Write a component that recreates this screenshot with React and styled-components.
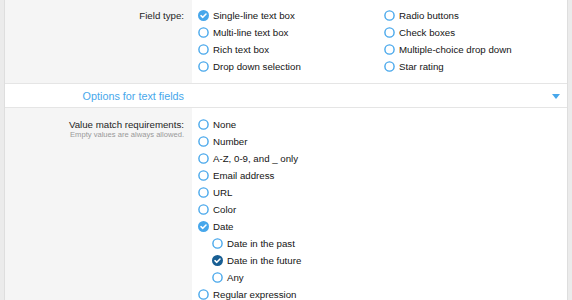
import React from "react";
import styled, { createGlobalStyle } from "styled-components";

const GlobalStyle = createGlobalStyle`
  body {
    margin: 0;
    background: #ebebeb;
    font-family: "Liberation Sans", Arial, sans-serif;
    font-size: 9.7px;
    color: #141414;
  }
`;

const fieldTypes = [
  ["Single-line text box", "Radio buttons"],
  ["Multi-line text box", "Check boxes"],
  ["Rich text box", "Multiple-choice drop down"],
  ["Drop down selection", "Star rating"],
];

const matchOptions = [
  { label: "None" },
  { label: "Number" },
  { label: "A-Z, 0-9, and _ only" },
  { label: "Email address" },
  { label: "URL" },
  { label: "Color" },
  { label: "Date", checked: true },
  { label: "Date in the past", nested: true },
  { label: "Date in the future", nested: true, checked: true, dark: true },
  { label: "Any", nested: true },
  { label: "Regular expression" },
];

function Radio({ checked, dark }) {
  return (
    <RadioIcon viewBox="0 0 11 11">
      {checked ? (
        <>
          <circle cx="5.5" cy="5.5" r="5.5" fill={dark ? "#185e93" : "#47a7eb"} />
          <path d="M3 5.7 L4.8 7.3 L8 4" fill="none" stroke="#fff" strokeWidth="1.6" strokeLinecap="round" strokeLinejoin="round" />
        </>
      ) : (
        <circle cx="5.5" cy="5.5" r="4.6" fill="#fff" stroke="#47a7eb" strokeWidth="1.4" />
      )}
    </RadioIcon>
  );
}

function Option({ label, checked, dark, nested }) {
  return (
    <OptionRow $nested={nested}>
      <Radio checked={checked} dark={dark} />
      <span>{label}</span>
    </OptionRow>
  );
}

export default function App() {
  return (
    <>
      <GlobalStyle />
      <Page>
        <Panel>
          <FormRow $top={7}>
            <Label>Field type:</Label>
            <Controls>
              <TwoCols>
                {fieldTypes.map(([a, b], i) => (
                  <React.Fragment key={a}>
                    <Option label={a} checked={i === 0} />
                    <Option label={b} />
                  </React.Fragment>
                ))}
              </TwoCols>
            </Controls>
          </FormRow>
          <SectionHeader>
            <SectionTitle>Options for text fields</SectionTitle>
            <Toggle viewBox="0 0 8 5">
              <path d="M0 0 H8 L4 5 Z" fill="#47a7eb" />
            </Toggle>
          </SectionHeader>
          <FormRow $top={8}>
            <Label>
              Value match requirements:
              <Hint>Empty values are always allowed.</Hint>
            </Label>
            <Controls>
              {matchOptions.map((o) => (
                <Option key={o.label} {...o} />
              ))}
            </Controls>
          </FormRow>
        </Panel>
      </Page>
    </>
  );
}

const Page = styled.div`
  padding: 0 4px;
  min-height: 300px;
`;

const Panel = styled.div`
  border-left: 1px solid #dedede;
  border-right: 1px solid #dedede;
  background: #fff;
  min-height: 300px;
`;

const FormRow = styled.div`
  display: grid;
  grid-template-columns: 187px 1fr;
  padding-top: ${(p) => p.$top}px;
  background: linear-gradient(to right, #f5f5f5 187px, #fff 187px);
`;

const Label = styled.div`
  text-align: right;
  padding-right: 8px;
  line-height: 17px;
  color: #1e1e1e;
`;

const Hint = styled.div`
  font-size: 7.6px;
  line-height: 10px;
  color: #999;
  margin-top: -3px;
`;

const Controls = styled.div`
  padding: 0 0 8px 6px;
`;

const TwoCols = styled.div`
  display: grid;
  grid-template-columns: 186px 1fr;
`;

const OptionRow = styled.div`
  display: flex;
  align-items: center;
  gap: 4px;
  height: 17px;
  margin-left: ${(p) => (p.$nested ? "14px" : "0")};
`;

const RadioIcon = styled.svg`
  width: 11px;
  height: 11px;
  flex-shrink: 0;
`;

const SectionHeader = styled.div`
  display: flex;
  align-items: center;
  height: 22px;
  padding-top: 1px;
  border-top: 1px solid #e5e5e5;
  border-bottom: 1px solid #e5e5e5;
  background: #fff;
`;

const SectionTitle = styled.div`
  width: 179px;
  text-align: right;
  font-size: 10.8px;
  color: #47a7eb;
`;

const Toggle = styled.svg`
  width: 8px;
  height: 5px;
  margin-left: auto;
  margin-right: 7px;
`;
